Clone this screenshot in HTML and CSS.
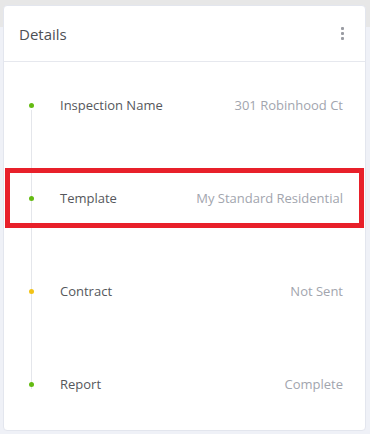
FILE: index.html
```html
<!DOCTYPE html>
<html lang="en">
<head>
  <meta charset="UTF-8">
  <meta name="viewport" content="width=device-width, initial-scale=1.0">
  <title>Details</title>
  <link rel="stylesheet" href="styles.css">
</head>
<body>
  <div class="card">
    <div class="card-head">
      <span class="card-title">Details</span>
      <span class="kebab"><i></i><i></i><i></i></span>
    </div>

    <div class="steps">
      <div class="step">
        <span class="dot ok"></span>
        <span class="label">Inspection Name</span>
        <span class="value">301 Robinhood Ct</span>
      </div>
      <div class="step marked">
        <span class="dot ok"></span>
        <span class="label">Template</span>
        <span class="value">My Standard Residential</span>
      </div>
      <div class="step">
        <span class="dot warn"></span>
        <span class="label">Contract</span>
        <span class="value">Not Sent</span>
      </div>
      <div class="step">
        <span class="dot ok"></span>
        <span class="label">Report</span>
        <span class="value">Complete</span>
      </div>
    </div>
  </div>
</body>
</html>
```

FILE: styles.css
```css
body {
  margin: 0;
  padding: 5px 4px 3px 3px;
  font-family: "Open Sans", "Noto Sans", sans-serif;
  background: linear-gradient(#e7e7e7 0, #e7e7e7 27px, #eff1f7 27px);
  height: 434px;
  box-sizing: border-box;
}

.card {
  background: #fff;
  border: 1px solid #e3e6ee;
  border-radius: 4px;
  height: 426px;
  box-sizing: border-box;
}

.card-head {
  height: 55px;
  border-bottom: 1px solid #e6e8ee;
  display: flex;
  align-items: center;
  justify-content: space-between;
  padding: 0 21px 0 15px;
}

.card-title {
  font-size: 15px;
  color: #4d4f54;
}

.kebab {
  display: flex;
  flex-direction: column;
  gap: 2px;
}

.kebab i {
  width: 3px;
  height: 3px;
  background: #9a9ca3;
  border-radius: 1px;
}

.steps {
  position: relative;
  padding: 23px 22px 0 0;
  display: flex;
  flex-direction: column;
  gap: 53px;
}

/* linia do timeline */
.steps::before {
  content: "";
  position: absolute;
  left: 27px;
  top: 48px;
  height: 279px;
  width: 1px;
  background: #e4e6eb;
}

.step {
  position: relative;
  height: 40px;
  display: flex;
  align-items: center;
  font-size: 13px;
}

.dot {
  width: 5px;
  height: 5px;
  border-radius: 50%;
  margin-left: 25px;
  position: relative;
  z-index: 1;
}

.dot.ok { background: #64bb12; }
.dot.warn { background: #f2c318; }

.label {
  margin-left: 26px;
  color: #55575c;
  flex: 1;
}

.value {
  color: #a2a5ae;
}

.marked::after {
  content: "";
  position: absolute;
  left: 1px;
  right: -21px;
  top: -10px;
  bottom: -10px;
  border: 5px solid #e8202a;
}
```
